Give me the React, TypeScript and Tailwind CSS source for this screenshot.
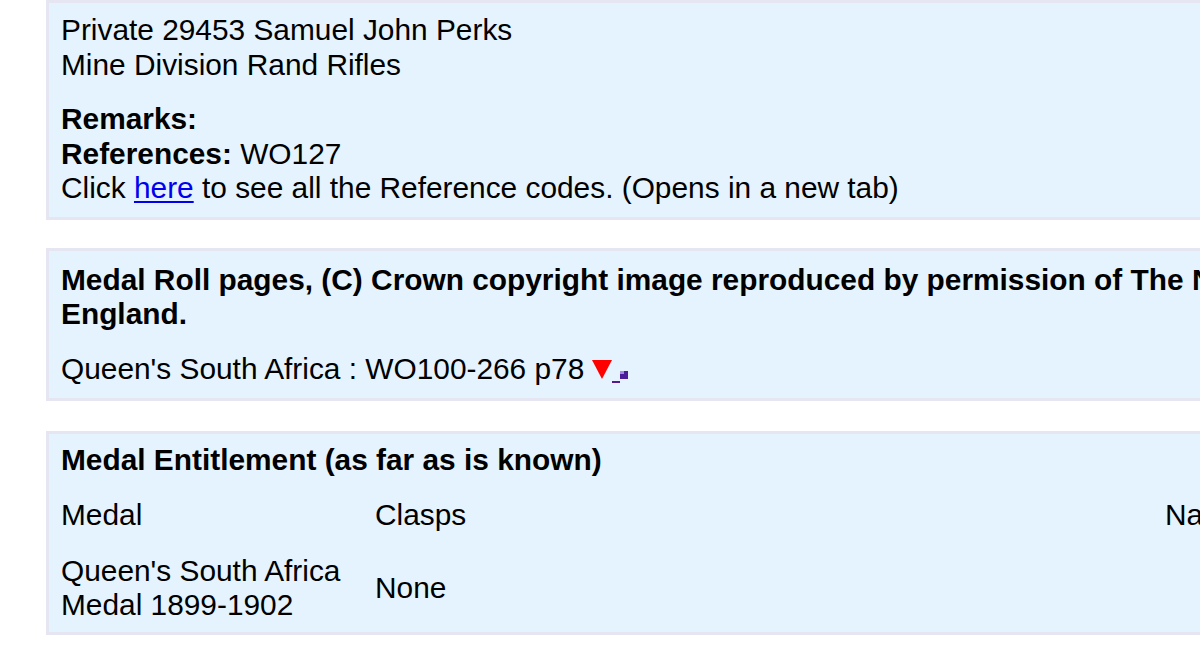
import React from "react";

function Panel({ children, className }: { children: React.ReactNode; className: string }) {
  return (
    <div
      className={
        "ml-[46px] w-[1610px] border-[3px] border-[#e6e6f2] bg-[#e4f3fd] px-[12px] " + className
      }
    >
      {children}
    </div>
  );
}

export default function App() {
  return (
    <div
      className="w-[1200px] h-[662px] overflow-hidden bg-white text-black text-[29.85px] leading-[34.5px]"
      style={{ fontFamily: '"Liberation Sans", Arial, sans-serif' }}
    >
      <Panel className="pt-[10px] pb-[11px]">
        <div>
          <div>Private 29453 Samuel John Perks</div>
          <div>Mine Division Rand Rifles</div>
        </div>
        <div className="mt-[20px]">
          <div className="font-bold">Remarks:</div>
          <div>
            <span className="font-bold">References:</span> WO127
          </div>
          <div>
            Click{" "}
            <a href="#" className="text-[#0000ee] underline underline-offset-[3px]">
              here
            </a>{" "}
            to see all the Reference codes. (Opens in a new tab)
          </div>
        </div>
      </Panel>

      <Panel className="mt-[28px] pt-[12px] pb-[12px]">
        <div className="font-bold">
          Medal Roll pages, (C) Crown copyright image reproduced by permission of The National
          Archives, London, England.
        </div>
        <div className="mt-[20px] flex items-center">
          <span>Queen's South Africa : WO100-266 p78</span>
          <span className="inline-flex items-end ml-[8px] mt-[6px]">
            <svg width="20" height="19" viewBox="0 0 20 19" className="mb-[5px]">
              <polygon points="0,0 20,0 10,19" fill="#ff0000" />
            </svg>
            <span className="inline-block w-[8px] h-[2px] bg-[#551a8b] mb-[1px]" />
            <span className="inline-block w-[8px] h-[8px] bg-[#4b1d9a] mb-[5px] relative">
              <span className="absolute left-0 top-0 w-[4px] h-[3px] bg-[#a58ae6]" />
            </span>
          </span>
        </div>
      </Panel>

      <Panel className="mt-[30px] pt-[9px] pb-[9px]">
        <div className="font-bold">Medal Entitlement (as far as is known)</div>
        <div className="mt-[20px] grid grid-cols-[314px_790px_1fr] gap-y-[21.5px] items-center">
          <div>Medal</div>
          <div>Clasps</div>
          <div>Name as on roll</div>
          <div>
            <div>Queen's South Africa</div>
            <div>Medal 1899-1902</div>
          </div>
          <div>None</div>
          <div></div>
        </div>
      </Panel>
    </div>
  );
}
